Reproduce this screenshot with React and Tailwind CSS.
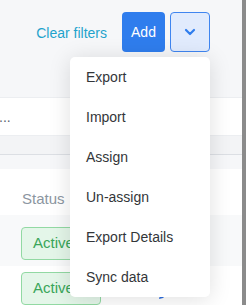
import React from "react";

const font = { fontFamily: '"Liberation Sans", Arial, sans-serif' };

function Badge() {
  return (
    <div className="inline-flex h-[33px] w-[80px] items-center rounded-[4px] border border-[#92d9a3] bg-[#e4f6e9] pl-[11px] text-[15px] text-[#3aa65a]">
      Active
    </div>
  );
}

export default function App() {
  const items = ["Export", "Import", "Assign", "Un-assign", "Export Details", "Sync data"];
  return (
    <div className="flex h-[305px] w-[246px] overflow-hidden bg-[#f6f7f9]" style={font}>
      <div className="relative flex w-[242px] flex-col">
        {/* top toolbar */}
        <div className="flex h-[98px] items-start justify-end bg-[#f6f7f9] pr-[32px] pt-[12px]">
          <button className="mr-[15px] mt-[11px] text-[14px] text-[#1fa3cc]">Clear filters</button>
          <button className="flex h-[40px] w-[43px] items-center justify-center rounded-[4px] bg-[#2f7ded] text-[14px] text-white">
            Add
          </button>
          <button className="ml-[5px] flex h-[40px] w-[40px] items-center justify-center rounded-[4px] border border-[#3f85f0] bg-[#e1ebfd]">
            <svg width="12" height="8" viewBox="0 0 12 8" fill="none">
              <path d="M2 2l4 4 4-4" stroke="#2f7ded" strokeWidth="2.2" strokeLinecap="round" strokeLinejoin="round" />
            </svg>
          </button>
        </div>
        {/* search row */}
        <div className="flex h-[39px] items-center border-t border-[#eceef1] bg-white text-[14px] text-[#5b6472]">
          <span className="-ml-[1px] mt-[3px]">...</span>
        </div>
        <div className="h-[20px] border-t border-[#eceef1] border-b border-b-[#dcdfe4] bg-[#f3f4f6]" />
        <div className="h-[15px] bg-[#f6f7f9]" />
        {/* table header */}
        <div className="flex h-[46px] items-end bg-white pb-[4px] pl-[22px] text-[15px] text-[#8c96a1]">Status</div>
        {/* row 1 */}
        <div className="flex h-[52px] items-start bg-[#f8f9fa] pl-[21px] pt-[12px]">
          <Badge />
        </div>
        {/* row 2 */}
        <div className="relative flex flex-1 items-start bg-white pl-[21px] pt-[6px]">
          <Badge />
          <svg className="absolute left-[158px] top-[22px]" width="12" height="12" viewBox="0 0 12 12">
            <path d="M1 11l1-4 6-6 3 3-6 6z" fill="#2f6fe0" />
          </svg>
        </div>

        {/* dropdown menu */}
        <div className="absolute left-[70px] top-[57px] w-[140px] rounded-[5px] bg-white py-0 shadow-[0_2px_22px_rgba(0,0,0,0.13)]">
          {items.map((t) => (
            <div key={t} className="flex h-[40px] items-center pl-[16px] text-[14px] text-[#333639]">
              {t}
            </div>
          ))}
        </div>
      </div>
      <div className="w-[4px] bg-[#8b8b8b]" />
    </div>
  );
}
